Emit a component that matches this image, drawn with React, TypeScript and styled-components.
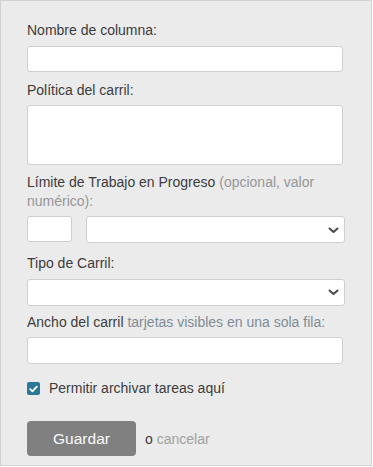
import React from "react";
import styled, { createGlobalStyle } from "styled-components";

const GlobalStyle = createGlobalStyle`
  * {
    box-sizing: border-box;
  }
  body {
    margin: 0;
    background: #fff;
    font-family: "Liberation Sans", Arial, sans-serif;
  }
`;

const Panel = styled.div`
  width: 372px;
  height: 466px;
  background: #ebebeb;
  border: 1px solid #d2d2d2;
  padding: 20px 26px 0 26px;
  color: #3c3c3c;
  font-size: 14px;
`;

const Field = styled.div<{ $mb?: number }>`
  margin-bottom: ${(p) => (p.$mb !== undefined ? p.$mb : 9)}px;
`;

const Label = styled.label`
  display: block;
  line-height: 18.5px;
  margin-bottom: 6px;
`;

const Hint = styled.span<{ $tone?: "grey" | "slate" }>`
  color: ${(p) => (p.$tone === "slate" ? "#7f8c97" : "#969696")};
`;

const TextInput = styled.input<{ $w?: string; $h?: number }>`
  display: block;
  width: ${(p) => p.$w || "316px"};
  height: ${(p) => p.$h || 26}px;
  border: 1px solid #cfcfcf;
  border-radius: 3px;
  background: #fff;
  font: inherit;
  padding: 0 6px;
  outline: none;
`;

const TextArea = styled.textarea`
  display: block;
  width: 316px;
  height: 60px;
  border: 1px solid #cfcfcf;
  border-radius: 3px;
  background: #fff;
  font: inherit;
  resize: none;
  outline: none;
`;

const Row = styled.div`
  display: flex;
  gap: 14px;
`;

const SelectWrap = styled.div`
  position: relative;
  flex: 1;
`;

const Select = styled.select`
  display: block;
  width: 100%;
  height: 27px;
  appearance: none;
  border: 1px solid #cfcfcf;
  border-radius: 3px;
  background: #fff;
  font: inherit;
  outline: none;
`;

const Chevron = styled.svg`
  position: absolute;
  right: 6px;
  top: 50%;
  margin-top: -3px;
  pointer-events: none;
`;

const CheckRow = styled.label`
  display: flex;
  align-items: center;
  gap: 9px;
  line-height: 19px;
  margin-top: 15px;
`;

const Box = styled.span`
  width: 13px;
  height: 13px;
  border-radius: 2px;
  background: #2a7898;
  display: flex;
  align-items: center;
  justify-content: center;
`;

const Actions = styled.div`
  display: flex;
  align-items: center;
  gap: 9px;
  margin-top: 23px;
`;

const SaveButton = styled.button`
  width: 109px;
  height: 35px;
  border: none;
  border-radius: 4px;
  background: #808080;
  color: #fafafa;
  font-family: "Liberation Sans", Arial, sans-serif;
  font-size: 15.5px;
`;

const Cancel = styled.span`
  color: #3c3c3c;
  a {
    color: #a0a0a0;
    text-decoration: none;
  }
`;

const ChevronDown = () => (
  <Chevron width="11" height="7" viewBox="0 0 11 7">
    <polyline
      points="1.5,1.5 5.5,5 9.5,1.5"
      fill="none"
      stroke="#4a4a4a"
      strokeWidth="2"
      strokeLinecap="round"
      strokeLinejoin="round"
    />
  </Chevron>
);

const App = () => {
  return (
    <>
      <GlobalStyle />
      <Panel>
        <Field>
          <Label>Nombre de columna:</Label>
          <TextInput type="text" />
        </Field>
        <Field $mb={8}>
          <Label>Política del carril:</Label>
          <TextArea />
        </Field>
        <Field $mb={11}>
          <Label>
            Límite de Trabajo en Progreso <Hint>(opcional, valor</Hint>
            <br />
            <Hint>numérico):</Hint>
          </Label>
          <Row>
            <TextInput type="text" $w="45px" />
            <SelectWrap>
              <Select>
                <option></option>
              </Select>
              <ChevronDown />
            </SelectWrap>
          </Row>
        </Field>
        <Field $mb={7}>
          <Label>Tipo de Carril:</Label>
          <SelectWrap>
            <Select>
              <option></option>
            </Select>
            <ChevronDown />
          </SelectWrap>
        </Field>
        <Field $mb={0}>
          <Label>
            Ancho del carril{" "}
            <Hint $tone="slate">tarjetas visibles en una sola fila:</Hint>
          </Label>
          <TextInput type="text" $h={27} />
        </Field>
        <CheckRow>
          <Box>
            <svg width="9" height="8" viewBox="0 0 9 8">
              <polyline
                points="1.2,4.2 3.4,6.3 7.8,1.6"
                fill="none"
                stroke="#fff"
                strokeWidth="1.8"
                strokeLinecap="round"
                strokeLinejoin="round"
              />
            </svg>
          </Box>
          Permitir archivar tareas aquí
        </CheckRow>
        <Actions>
          <SaveButton>Guardar</SaveButton>
          <Cancel>
            o <a href="#">cancelar</a>
          </Cancel>
        </Actions>
      </Panel>
    </>
  );
};

export default App;
